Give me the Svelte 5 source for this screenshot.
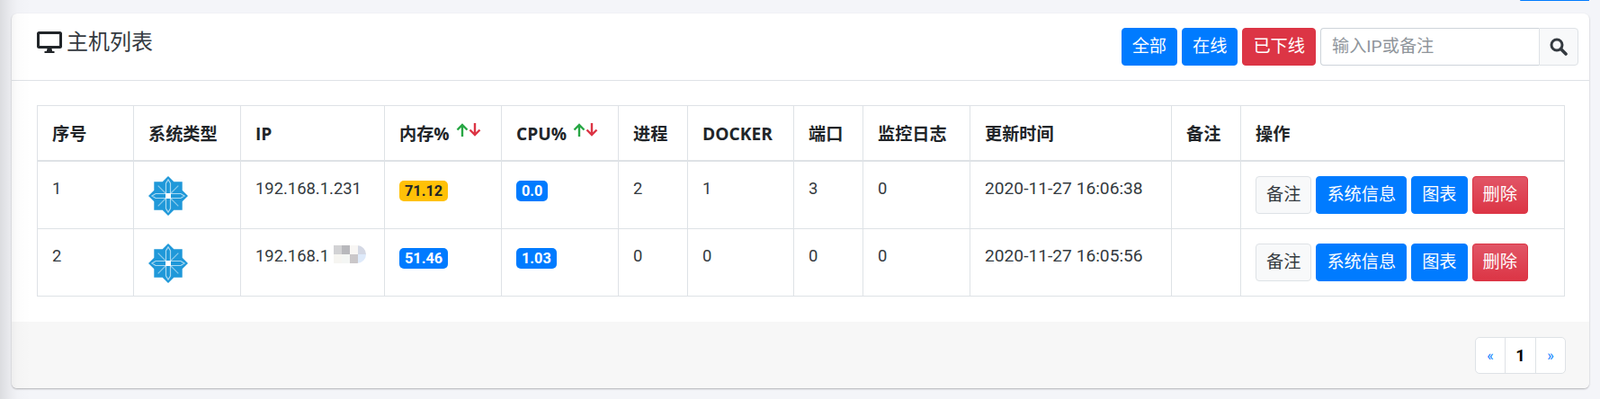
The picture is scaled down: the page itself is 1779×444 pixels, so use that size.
<script lang="ts">
  const hosts = [
    { id: 1, ip: '192.168.1.231', masked: false, mem: '71.12', memKind: 'warn', cpu: '0.0', proc: 2, docker: 1, port: 3, log: 0, time: '2020-11-27 16:06:38' },
    { id: 2, ip: '192.168.1', masked: true, mem: '51.46', memKind: 'primary', cpu: '1.03', proc: 0, docker: 0, port: 0, log: 0, time: '2020-11-27 16:05:56' }
  ];

  // mosaic over the censored part of the second address
  const mosaic = ['#d2d2d4', '#b8b8bc', '#f8f6f4', '#d4d8e4', '#f6f5f1', '#f4f6f4', '#cac7c9', '#deeafa'];
  const axes = [0, 90, 180, 270];
  const diagonals = [45, 135, 225, 315];
</script>

<div class="page">
  <div class="shade"></div>
  <div class="top"><a href="#back" class="back">返回上级</a></div>

  <section class="card">
    <header class="card-head">
      <h2 class="title">
        <svg class="monitor" viewBox="0 0 28 24" aria-hidden="true">
          <path d="M2.500 0h23A2.500 2.500 0 0 1 28 2.500v14a2.500 2.500 0 0 1-2.500 2.500H2.500A2.500 2.500 0 0 1 0 16.500v-14A2.500 2.500 0 0 1 2.500 0zM3 3v13h22V3zM11.500 19h5l.7 3h2.300v2h-11v-2h2.300z" fill-rule="evenodd" />
        </svg>
        主机列表
      </h2>
      <div class="tools">
        <button type="button" class="btn primary">全部</button>
        <button type="button" class="btn primary">在线</button>
        <button type="button" class="btn danger">已下线</button>
        <div class="search">
          <input type="text" placeholder="输入IP或备注" />
          <button type="button" class="search-btn" aria-label="搜索">
            <svg viewBox="0 0 20 20" width="20" height="20" aria-hidden="true">
              <circle cx="8" cy="8" r="6" fill="none" stroke="#343a40" stroke-width="3" />
              <path d="M12.500 12.500L18 18" stroke="#343a40" stroke-width="3.600" stroke-linecap="round" />
            </svg>
          </button>
        </div>
      </div>
    </header>

    <div class="card-body">
      <table>
        <colgroup>
          <col class="c-id" /><col class="c-os" /><col class="c-ip" /><col class="c-mem" /><col class="c-cpu" /><col class="c-proc" />
          <col class="c-docker" /><col class="c-port" /><col class="c-log" /><col class="c-time" /><col class="c-note" /><col class="c-ops" />
        </colgroup>
        <thead>
          <tr>
            <th>序号</th>
            <th>系统类型</th>
            <th>IP</th>
            <th>内存% {@render arrows()}</th>
            <th>CPU% {@render arrows()}</th>
            <th>进程</th>
            <th>DOCKER</th>
            <th>端口</th>
            <th>监控日志</th>
            <th>更新时间</th>
            <th>备注</th>
            <th>操作</th>
          </tr>
        </thead>
        <tbody>
          {#each hosts as host}
            <tr>
              <td>{host.id}</td>
              <td>
                <svg class="logo" viewBox="0 0 44 44" aria-label="CentOS">
                  <path d="M22 0l6.300 6.300h9.400v9.400L44 22l-6.300 6.300v9.400h-9.400L22 44l-6.300-6.300H6.300v-9.400L0 22l6.300-6.300V6.300h9.400z" fill="#1f98d9" />
                  {#each diagonals as angle}
                    <path d="M22 22V6" transform="rotate({angle} 22 22)" stroke="#8ccbec" stroke-width="1.200" />
                  {/each}
                  {#each axes as angle}
                    <path d="M19.500 20V8L22 4l2.500 4v12" transform="rotate({angle} 22 22)" fill="none" stroke="#a9d9f2" stroke-width="1.200" />
                  {/each}
                  <rect x="19" y="19" width="6" height="6" fill="#fff" />
                </svg>
              </td>
              <td class="ip">
                {host.ip}{#if host.masked}<span class="mosaic">
                    {#each mosaic as tone}<i style="background:{tone}"></i>{/each}
                  </span>{/if}
              </td>
              <td><span class="badge {host.memKind}">{host.mem}</span></td>
              <td><span class="badge primary">{host.cpu}</span></td>
              <td>{host.proc}</td>
              <td>{host.docker}</td>
              <td>{host.port}</td>
              <td>{host.log}</td>
              <td class="time">{host.time}</td>
              <td></td>
              <td class="ops">
                <button type="button" class="btn light">备注</button>
                <button type="button" class="btn primary">系统信息</button>
                <button type="button" class="btn primary">图表</button>
                <button type="button" class="btn danger soft">删除</button>
              </td>
            </tr>
          {/each}
        </tbody>
      </table>
    </div>

    <footer class="card-foot">
      <nav class="pager">
        <a href="#prev" class="prev">«</a>
        <a href="#one" class="now">1</a>
        <a href="#next" class="next">»</a>
      </nav>
    </footer>
  </section>
</div>

{#snippet arrows()}
  <svg class="arrows" viewBox="0 0 28 15" aria-hidden="true">
    <path d="M7 15V2M1.500 7.500L7 2l5.500 5.500" fill="none" stroke="#28a745" stroke-width="2.400" />
    <path d="M21 0v13M15.500 7.500L21 13l5.500-5.500" fill="none" stroke="#dc3545" stroke-width="2.400" />
  </svg>
{/snippet}

<style>
  :global(body) {
    margin: 0;
    background: #f4f5f9;
    font-family: Roboto, "Noto Sans CJK SC", sans-serif;
    font-size: 18.4px;
    line-height: 1.5;
    color: #212529;
  }

  .page {
    position: relative;
    height: 444px;
    overflow: hidden;
    padding-left: 13px;
    padding-right: 12px;
  }

  /* soft shadow thrown by the collapsed sidebar, lies over the card */
  .shade {
    position: absolute;
    left: 0;
    top: 0;
    bottom: 0;
    width: 34px;
    background: linear-gradient(to right, rgba(0, 0, 0, 0.1), rgba(0, 0, 0, 0.04) 12px, rgba(0, 0, 0, 0.012) 20px, transparent);
    pointer-events: none;
    z-index: 2;
  }

  .top {
    height: 15px;
    display: flex;
    justify-content: flex-end;
    align-items: flex-end;
    overflow: hidden;
    font-size: 19.2px;
  }

  .back {
    color: #007bff;
    margin-bottom: 7px;
    text-decoration: underline;
    flex: none;
  }

  .card {
    background: #fff;
    border-radius: 6px;
    box-shadow: 0 1px 2px rgba(0, 0, 0, 0.28);
    overflow: hidden;
  }

  .card-head {
    height: 75px;
    box-sizing: border-box;
    border-bottom: 1px solid #dfe2e6;
    padding: 16px 12px 0 28px;
    display: flex;
    justify-content: space-between;
    align-items: flex-start;
  }

  .title {
    margin: -2px 0 0;
    font-size: 24px;
    font-weight: 400;
    line-height: 36px;
    display: flex;
    align-items: center;
    gap: 5px;
    color: #343a40;
  }

  .monitor {
    width: 28px;
    height: 24px;
    fill: #212529;
  }

  .tools {
    display: flex;
    gap: 5px;
  }

  .btn {
    height: 42px;
    box-sizing: border-box;
    padding: 0 11px;
    border: 1px solid transparent;
    border-radius: 4px;
    font: inherit;
    font-size: 19.2px;
    cursor: pointer;
  }

  .btn.primary {
    background: #007bff;
    border-color: #007bff;
    color: #fff;
  }

  .btn.danger {
    background: #dc3545;
    border-color: #dc3545;
    color: #fff;
  }

  .btn.danger.soft {
    background: linear-gradient(to bottom, #e15566, #dc3545);
  }

  .btn.light {
    background: #f8f9fa;
    border-color: #dee2e6;
    color: #343a40;
  }

  .search {
    display: flex;
    width: 287px;
    height: 42px;
  }

  .search input {
    flex: 1;
    min-width: 0;
    box-sizing: border-box;
    padding: 0 12px;
    border: 1px solid #ced4da;
    border-right: none;
    border-radius: 4px 0 0 4px;
    font: inherit;
    font-size: 19.2px;
    color: #495057;
  }

  .search input::placeholder {
    color: #8f959b;
  }

  .search-btn {
    width: 44px;
    display: flex;
    align-items: center;
    justify-content: center;
    background: #f8f9fa;
    border: 1px solid #dee2e6;
    border-radius: 0 4px 4px 0;
    padding: 0;
  }

  .card-body {
    padding: 27px 28px 28px 28px;
  }

  table {
    width: 1698px;
    table-layout: fixed;
    border-collapse: collapse;
  }

  .c-id { width: 107px; }
  .c-os { width: 119px; }
  .c-ip { width: 160px; }
  .c-mem { width: 130px; }
  .c-cpu { width: 130px; }
  .c-proc { width: 77px; }
  .c-docker { width: 118px; }
  .c-port { width: 77px; }
  .c-log { width: 119px; }
  .c-time { width: 224px; }
  .c-note { width: 77px; }
  .c-ops { width: 360px; }

  th,
  td {
    border: 1px solid #dee2e6;
    padding: 16px;
    text-align: left;
    vertical-align: top;
    white-space: nowrap;
  }

  thead th {
    border-bottom-width: 2px;
    font-family: "Open Sans", "Noto Sans CJK SC", sans-serif;
    font-weight: 700;
    font-size: 19.2px;
    height: 30px;
    line-height: 30px;
    padding-top: 16px;
    padding-bottom: 14px;
  }

  tbody td {
    height: 44px;
    padding-bottom: 14px;
    color: #343a40;
  }

  .time {
    font-size: 19.2px;
  }

  .logo {
    width: 44px;
    height: 44px;
    display: block;
  }

  .mosaic {
    display: inline-grid;
    grid-template-columns: repeat(4, 9px);
    grid-auto-rows: 10px;
    margin: 2px 0 0 5px;
    vertical-align: top;
    border-top-right-radius: 10px;
    border-bottom-right-radius: 10px;
    overflow: hidden;
  }

  .mosaic i {
    display: block;
  }

  .badge {
    display: inline-block;
    height: 23px;
    line-height: 23px;
    padding: 0 6px;
    margin-top: 5px;
    border-radius: 5px;
    font-size: 16.3px;
    font-weight: 700;
    vertical-align: top;
  }

  .badge.warn {
    background: #ffc107;
    color: #212529;
  }

  .badge.primary {
    background: #007bff;
    color: #fff;
  }

  .arrows {
    width: 28px;
    height: 15px;
    vertical-align: 4px;
    margin-left: 2px;
  }

  .ops {
    font-size: 0;
  }

  .ops .btn {
    margin-right: 5px;
  }

  .card-foot {
    background: #f7f7f7;
    height: 74px;
    box-sizing: border-box;
    padding: 17px 26px 0 0;
    display: flex;
    justify-content: flex-end;
    align-items: flex-start;
  }

  .pager {
    display: flex;
    height: 41px;
    background: #fff;
    border: 1px solid #dee2e6;
    border-radius: 5px;
    box-sizing: border-box;
  }

  .pager a {
    display: flex;
    align-items: center;
    justify-content: center;
    text-decoration: none;
    color: #007bff;
  }

  .prev,
  .next {
    width: 32px;
    font-size: 16px;
  }

  .now {
    width: 33px;
    border-left: 1px solid #dee2e6;
    border-right: 1px solid #dee2e6;
    font-weight: 700;
  }

  .pager a.now {
    color: #000;
  }
</style>
